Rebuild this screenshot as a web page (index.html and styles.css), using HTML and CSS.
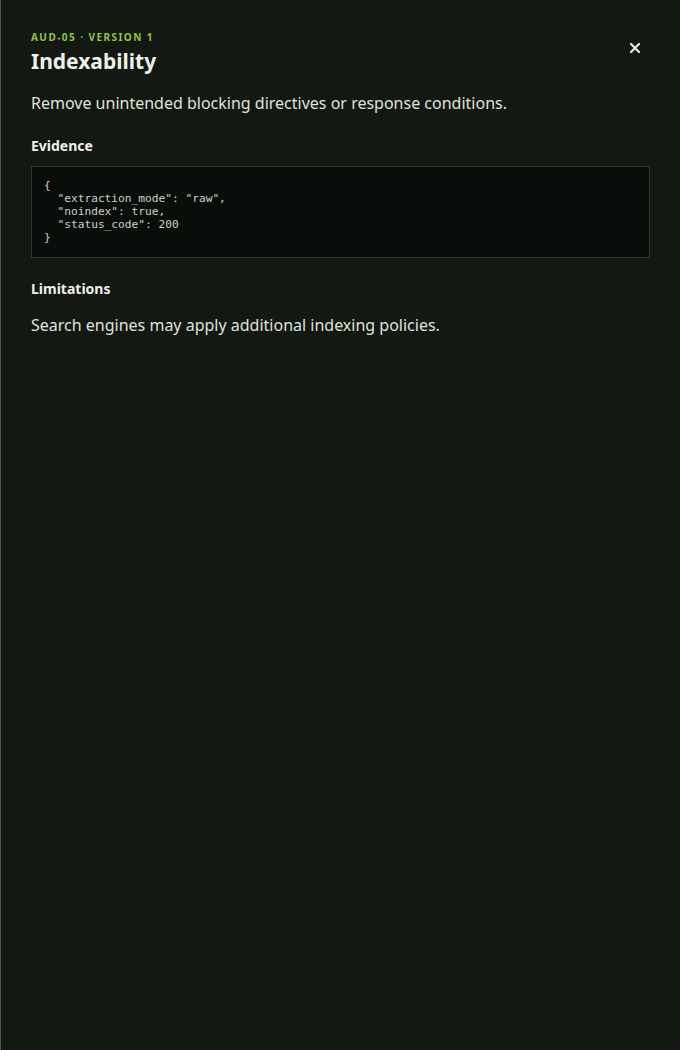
FILE: index.html
```html
<!DOCTYPE html>
<html lang="en">
<head>
<meta charset="utf-8">
<title>Indexability</title>
<link rel="stylesheet" href="styles.css">
</head>
<body>
<aside class="panel">
  <header class="panel-head">
    <div class="head-text">
      <div class="eyebrow">AUD-05 · VERSION 1</div>
      <h1 class="title">Indexability</h1>
    </div>
    <button class="close" aria-label="Close">
      <svg width="12" height="12" viewBox="0 0 12 12"><path d="M2 2L10 10M10 2L2 10" stroke="currentColor" stroke-width="2.2" stroke-linecap="round"/></svg>
    </button>
  </header>
  <p class="desc">Remove unintended blocking directives or response conditions.</p>
  <h2 class="section-title">Evidence</h2>
  <pre class="code">{
  "extraction_mode": "raw",
  "noindex": true,
  "status_code": 200
}</pre>
  <h2 class="section-title">Limitations</h2>
  <p class="desc">Search engines may apply additional indexing policies.</p>
</aside>
</body>
</html>
```
FILE: styles.css
```css
html, body {
  margin: 0;
  height: 100%;
  background: #141813;
}
body {
  font-family: "Noto Sans", "Open Sans", sans-serif;
  color: #e6e9e2;
}
.panel {
  box-sizing: border-box;
  min-height: 100%;
  border-left: 1px solid #4b5d3f;
  padding: 30px 30px 30px 30px;
}
.panel-head {
  display: flex;
  justify-content: space-between;
  align-items: flex-start;
}
.eyebrow {
  font-size: 10px;
  font-weight: 700;
  letter-spacing: 1.45px;
  color: #8fc641;
  line-height: 14px;
}
.title {
  margin: 3px 0 0 0;
  font-size: 21px;
  font-weight: 700;
  line-height: 28px;
  color: #eef0ea;
}
.close {
  margin-top: 8px;
  margin-right: 5px;
  background: none;
  border: none;
  padding: 4px;
  color: #e6e9e2;
  display: flex;
  cursor: pointer;
}
.desc {
  margin: 16px 0 0 0;
  font-size: 16px;
  line-height: 24px;
  color: #dfe3db;
}
.section-title {
  margin: 21px 0 0 0;
  font-size: 14px;
  font-weight: 700;
  line-height: 20px;
  color: #eef0ea;
}
.code {
  margin: 10px 0 0 0;
  background: #0a0e0a;
  border: 1px solid #2f372d;
  padding: 12px 13px 13px 12px;
  font-family: "DejaVu Sans Mono", monospace;
  font-size: 11.2px;
  line-height: 13px;
  color: #cdd1c9;
}
.code + .section-title {
  margin-top: 21px;
}
.section-title + .desc {
  margin-top: 14px;
}
```
